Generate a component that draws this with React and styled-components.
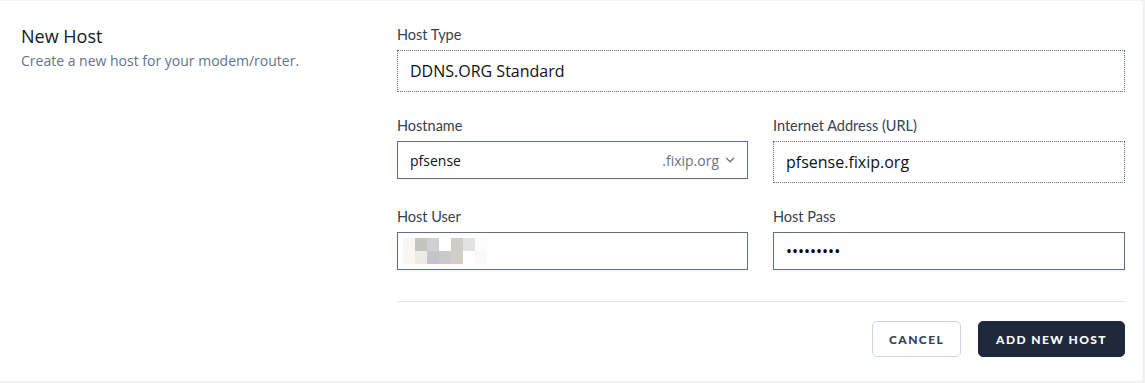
import React from 'react';
import styled, { createGlobalStyle } from 'styled-components';
import { ChevronDown } from 'lucide-react';

const GlobalStyle = createGlobalStyle`
  * {
    box-sizing: border-box;
  }

  body {
    margin: 0;
    background: #f1f2f4;
    font-family: 'Open Sans', 'Noto Sans', sans-serif;
  }
`;

const Card = styled.div`
  margin-top: 1px;
  width: 1143px;
  height: 380px;
  background: #fff;
  border-radius: 0 4px 4px 0;
  box-shadow: 0 1px 2px rgba(15, 23, 42, 0.06);
  display: flex;
  padding: 24px 18px 24px 21px;
`;

const Intro = styled.div`
  width: 376px;
  flex-shrink: 0;
`;

const Title = styled.h2`
  margin: 0;
  font-size: 18px;
  line-height: 22px;
  font-weight: 400;
  color: #111827;
`;

const Subtitle = styled.p`
  margin: 4px 0 0;
  font-size: 14px;
  line-height: 20px;
  color: #64748b;
`;

const Form = styled.div`
  width: 728px;
  display: flex;
  flex-direction: column;
`;

const Grid = styled.div`
  display: grid;
  grid-template-columns: 351px 352px;
  column-gap: 25px;
  row-gap: 24px;
  align-items: start;
`;

const Field = styled.div`
  grid-column: ${({ $wide }) => ($wide ? '1 / -1' : 'auto')};
  display: flex;
  flex-direction: column;
  gap: 5px;
`;

const Label = styled.span`
  font-family: Lato, 'Open Sans', sans-serif;
  font-size: 14.5px;
  line-height: 20px;
  color: #374151;
`;

const Box = styled.div`
  height: ${({ $tall }) => ($tall ? '42px' : '38px')};
  border: 1px ${({ $dotted }) => ($dotted ? 'dotted' : 'solid')} #5f6f87;
  background: #fff;
  box-shadow: ${({ $dotted }) => ($dotted ? 'none' : '0 1px 2px rgba(15, 23, 42, 0.06)')};
  display: flex;
  align-items: center;
  padding: 0 12px 0 ${({ $inset }) => $inset ?? 12}px;
  font-size: ${({ $tall }) => ($tall ? '16px' : '14px')};
  color: #111;
`;

const Value = styled.span`
  flex: 1;
`;

const Suffix = styled.span`
  display: flex;
  align-items: center;
  gap: 4px;
  color: #6b7280;
  font-size: 14px;
  margin-right: -2px;
`;

const Dots = styled.span`
  font-size: 16px;
  letter-spacing: 0;
  color: #000;
`;

const Divider = styled.hr`
  margin: 31px 0 0;
  border: 0;
  border-top: 1px solid #e5e7eb;
`;

const Actions = styled.div`
  display: flex;
  justify-content: flex-end;
  gap: 17px;
  margin-top: 19px;
`;

const Button = styled.button`
  height: 36px;
  padding: 0 ${({ $primary }) => ($primary ? '17px' : '16px')};
  border-radius: 5px;
  border: 1px solid ${({ $primary }) => ($primary ? '#1e293b' : '#cbd5e1')};
  background: ${({ $primary }) => ($primary ? '#1e293b' : '#fff')};
  color: ${({ $primary }) => ($primary ? '#fff' : '#334155')};
  font-family: Lato, 'Open Sans', sans-serif;
  font-weight: 900;
  font-size: 12px;
  letter-spacing: 1.4px;
  text-transform: uppercase;
  cursor: pointer;
`;

const mosaic = [
  ['#f8f6f2', '#c2c6bf', '#d0d0d2', '#ffffff', '#d0cdc9', '#e0e3e5', '#fdfdfd'],
  ['#f9f7f2', '#ebece7', '#c5c5c7', '#cac9c9', '#d1cec9', '#ffffff', '#fafafa'],
];

const Blurred = () => (
  <svg width="84" height="26" viewBox="0 0 84 26">
    {mosaic.map((row, r) =>
      row.map((fill, c) => <rect key={`${r}-${c}`} x={c * 12} y={r * 13} width="12" height="13" fill={fill} />)
    )}
  </svg>
);

const App = () => (
  <>
    <GlobalStyle />
    <Card>
      <Intro>
        <Title>New Host</Title>
        <Subtitle>Create a new host for your modem/router.</Subtitle>
      </Intro>
      <Form>
        <Grid>
          <Field $wide>
            <Label>Host Type</Label>
            <Box $dotted $tall>
              <Value>DDNS.ORG Standard</Value>
            </Box>
          </Field>
          <Field>
            <Label>Hostname</Label>
            <Box>
              <Value>pfsense</Value>
              <Suffix>
                .fixip.org
                <ChevronDown size={14} strokeWidth={2.2} />
              </Suffix>
            </Box>
          </Field>
          <Field>
            <Label>Internet Address (URL)</Label>
            <Box $dotted $tall>
              <Value>pfsense.fixip.org</Value>
            </Box>
          </Field>
          <Field>
            <Label>Host User</Label>
            <Box $inset={5}>
              <Blurred />
            </Box>
          </Field>
          <Field>
            <Label>Host Pass</Label>
            <Box>
              <Dots>•••••••••</Dots>
            </Box>
          </Field>
        </Grid>
        <Divider />
        <Actions>
          <Button>Cancel</Button>
          <Button $primary>Add New Host</Button>
        </Actions>
      </Form>
    </Card>
  </>
);

export default App;
